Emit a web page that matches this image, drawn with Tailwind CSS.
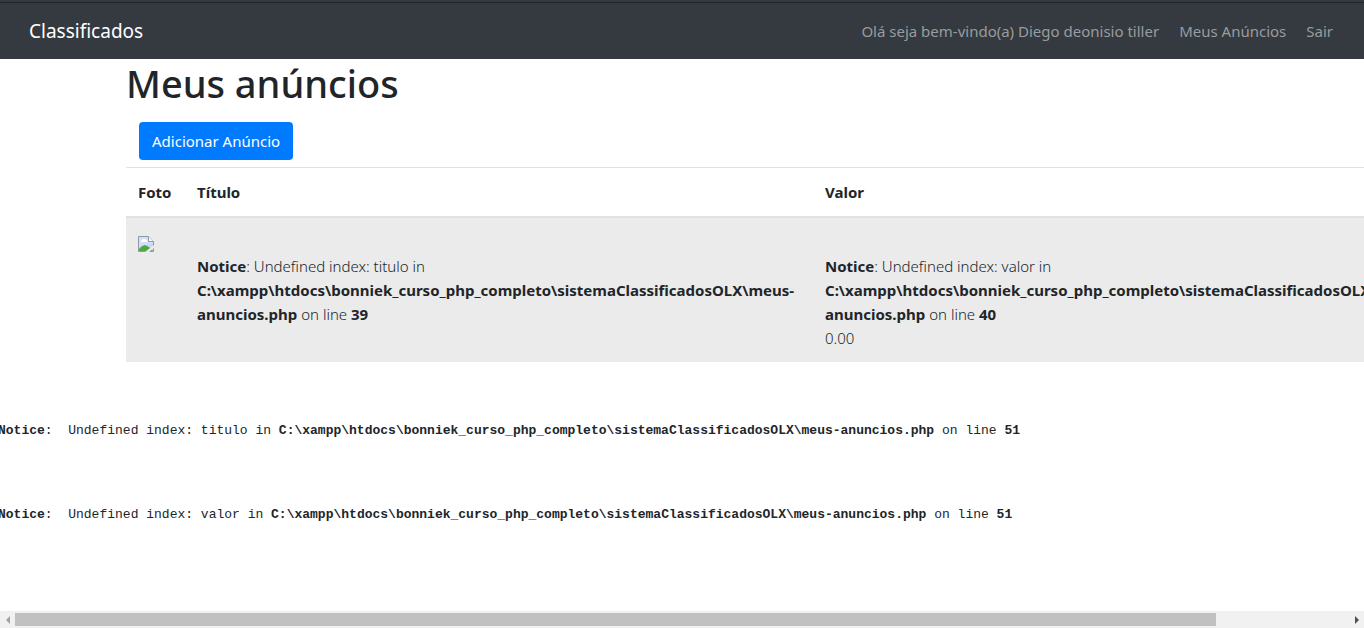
<!DOCTYPE html>
<html lang="pt-BR">
<head>
<meta charset="utf-8">
<meta name="viewport" content="width=device-width, initial-scale=1">
<title>Classificados</title>
<script src="https://cdn.jsdelivr.net/npm/@tailwindcss/browser@4"></script>
</head>
<body class="flex min-h-screen flex-col overflow-hidden bg-white font-['Noto_Sans','Open_Sans',sans-serif] text-[15px] leading-6 text-[#212529]">
  <nav class="border-t-2 border-[#343a40] bg-[#343a40]">
    <div class="flex items-center justify-between border-t border-[#212529] py-2 pr-[31px] pl-[29px]">
      <a href="#" class="text-[19px] leading-10 text-white">Classificados</a>
      <ul class="flex gap-5 text-[#999c9f]">
        <li>Olá seja bem-vindo(a) Diego deonisio tiller</li>
        <li><a href="#">Meus Anúncios</a></li>
        <li><a href="#">Sair</a></li>
      </ul>
    </div>
  </nav>

  <main class="flex flex-col pl-[126px]">
    <h1 class="text-[38px] leading-[48px] font-medium">Meus anúncios</h1>
    <a href="#" class="mt-[15px] ml-[13px] self-start rounded bg-[#007bff] px-[13px] py-[7px] text-white">Adicionar Anúncio</a>
    <div class="mt-[7px] overflow-hidden">
    <table class="w-[1315px] table-fixed border-collapse text-left">
      <colgroup>
        <col class="w-[59px]"><col class="w-[628px]"><col class="w-[628px]">
      </colgroup>
      <thead>
        <tr class="border-t border-b-2 border-[#dee2e6]">
          <th class="p-3 font-bold">Foto</th>
          <th class="p-3 font-bold">Título</th>
          <th class="p-3 font-bold">Valor</th>
        </tr>
      </thead>
      <tbody>
        <tr class="bg-[#ebebeb] align-top font-light">
          <td class="px-3 py-[18px]">
            <svg role="img" aria-label="Imagem indisponível" class="size-4" viewBox="0 0 16 16">
              <path d="M.5.5h10l5 5v10H.5z" fill="#c5d8f7"/>
              <path d="M1 1h9v5h5v1L1 11z" fill="#d3e0fa"/>
              <path d="M3 6V5l1-1 1-1h2l1 1h1v2z" fill="#fff"/>
              <path d="M1 15v-2l3-3 3-1 4 2 4 4z" fill="#4fa844"/>
              <path d="M.5 15.500V.5h10l5 5v10H.5" fill="none" stroke="#9298a3"/>
              <path d="M10.500.5v5h5" fill="#fff" stroke="#9298a3"/>
              <path d="M7 16 16 9v3l-5 4z" fill="#ebebeb"/>
            </svg>
          </td>
          <td class="p-3"><br><b class="font-bold">Notice</b>: Undefined index: titulo in <b class="font-bold">C:\xampp\htdocs\bonniek_curso_php_completo\sistemaClassificadosOLX\meus-<br>anuncios.php</b> on line <b class="font-bold">39</b></td>
          <td class="p-3"><br><b class="font-bold">Notice</b>: Undefined index: valor in <b class="font-bold">C:\xampp\htdocs\bonniek_curso_php_completo\sistemaClassificadosOLX\meus-<br>anuncios.php</b> on line <b class="font-bold">40</b><br>0.00</td>
        </tr>
      </tbody>
    </table>
    </div>
  </main>

  <div class="mt-[58px] -ml-[2px] flex flex-col gap-[63px] font-['Liberation_Mono',monospace] text-[13px] leading-[21px] whitespace-pre">
    <pre class="font-[inherit]"><b>Notice</b>:  Undefined index: titulo in <b>C:\xampp\htdocs\bonniek_curso_php_completo\sistemaClassificadosOLX\meus-anuncios.php</b> on line <b>51</b></pre>
    <pre class="font-[inherit]"><b>Notice</b>:  Undefined index: valor in <b>C:\xampp\htdocs\bonniek_curso_php_completo\sistemaClassificadosOLX\meus-anuncios.php</b> on line <b>51</b></pre>
  </div>

  <div class="mt-auto flex h-[17px] items-center bg-[#f1f1f1]">
    <button type="button" aria-label="Rolar para a esquerda" class="flex w-[15px] items-center justify-center">
      <svg class="h-2 w-1" viewBox="0 0 4 8"><path d="M4 0v8L0 4z" fill="#a3a3a3"/></svg>
    </button>
    <div class="flex-1"><div class="h-[13px] w-[90%] bg-[#c1c1c1]"></div></div>
    <button type="button" aria-label="Rolar para a direita" class="flex w-[15px] items-center justify-center">
      <svg class="h-2 w-1" viewBox="0 0 4 8"><path d="M0 0v8l4-4z" fill="#505050"/></svg>
    </button>
  </div>
</body>
</html>
